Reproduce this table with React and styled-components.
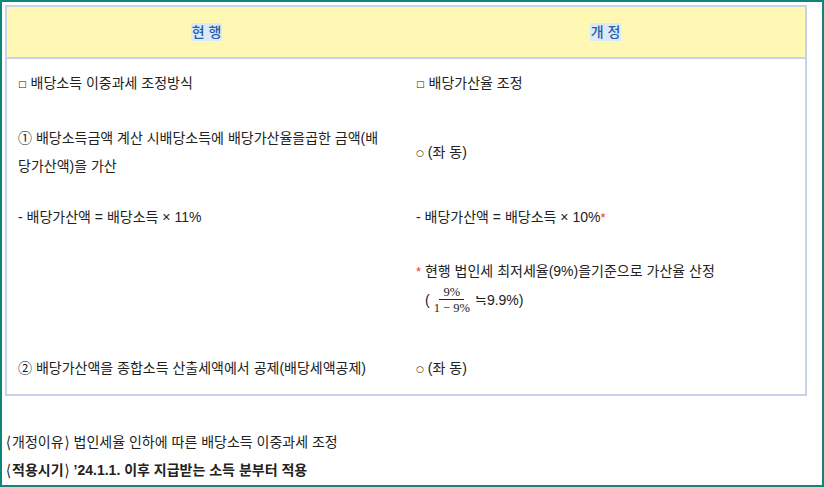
import React from 'react';
import styled, { createGlobalStyle } from 'styled-components';

const GlobalStyle = createGlobalStyle`
  html, body { margin: 0; padding: 0; background: #fff; }
  body {
    font-family: "Liberation Sans", "Noto Sans CJK KR", sans-serif;
    font-size: 14px;
    color: #222;
  }
`;

const Frame = styled.div`
  width: 824px;
  height: 487px;
  box-sizing: border-box;
  border: 2px solid #0f8579;
  padding: 3px;
  overflow: hidden;
`;

const Table = styled.div`
  width: 802px;
  box-sizing: border-box;
  border: 2px solid #c6d3e9;
`;

const HeadRow = styled.div`
  display: grid;
  grid-template-columns: 1fr 1fr;
  height: 50px;
  background: #fff8b5;
  border-bottom: 2px solid #c6d3e9;
`;

const HeadCell = styled.div`
  display: flex;
  align-items: center;
  justify-content: center;
`;

const HeadLabel = styled.span`
  background: #ddeaf6;
  color: #1f5fae;
  font-size: 14px;
  font-weight: 500;
  line-height: 18px;
  padding: 0 1px;
`;

const Body = styled.div`
  padding: 10px 0 12px;
`;

const Row = styled.div`
  display: grid;
  grid-template-columns: 1fr 1fr;
  margin-top: ${(p) => p.$top || 0}px;
`;

const Cell = styled.div`
  display: flex;
  flex-direction: column;
  justify-content: ${(p) => (p.$center ? 'center' : 'flex-start')};
  padding: 0 11px 0 ${(p) => (p.$right ? 10 : 11)}px;
  white-space: nowrap;
`;

const Line = styled.div`
  height: 28px;
  line-height: 28px;
`;

const Mark = styled.span`
  font-family: "DejaVu Sans", sans-serif;
  font-size: 9px;
  line-height: 1;
  margin-right: 4px;
  vertical-align: 1px;
`;

const Star = styled.span`
  color: #e33b2e;
  font-size: 13px;
  line-height: 1;
`;

const FormulaLine = styled.div`
  display: flex;
  align-items: center;
  height: 30px;
  padding-left: 9px;
  line-height: 1;
`;

const Fraction = styled.span`
  display: inline-flex;
  flex-direction: column;
  align-items: center;
  font-family: "Liberation Serif", "DejaVu Serif", serif;
  font-size: 12.5px;
  margin: 0 2px 0 1px;
`;

const Numer = styled.span`
  padding: 0 4px 1px;
  border-bottom: 1px solid #222;
`;

const Denom = styled.span`
  padding: 2px 3px 0;
`;

const Footer = styled.div`
  margin-top: 32px;
  padding-left: 1px;
`;

const FootLine = styled(Line)`
  font-weight: ${(p) => (p.$strong ? 600 : 400)};
`;

const Angle = styled.span`
  display: inline-block;
  font-family: "DejaVu Sans", sans-serif;
  font-weight: 400;
  font-size: 13px;
  transform: scaleY(1.25);
  margin: ${(p) => (p.$close ? '0 0 0 1px' : '0 1px 0 0')};
`;

export default function App() {
  return (
    <>
      <GlobalStyle />
      <Frame>
        <Table>
          <HeadRow>
            <HeadCell><HeadLabel>현 행</HeadLabel></HeadCell>
            <HeadCell><HeadLabel>개 정</HeadLabel></HeadCell>
          </HeadRow>
          <Body>
            <Row>
              <Cell><Line><Mark>□</Mark>배당소득 이중과세 조정방식</Line></Cell>
              <Cell $right><Line><Mark>□</Mark>배당가산율 조정</Line></Cell>
            </Row>
            <Row $top={27}>
              <Cell>
                <Line>① 배당소득금액 계산 시배당소득에 배당가산율을곱한 금액(배</Line>
                <Line>당가산액)을 가산</Line>
              </Cell>
              <Cell $right $center><Line><Mark>○</Mark>(좌 동)</Line></Cell>
            </Row>
            <Row $top={23}>
              <Cell><Line>- 배당가산액 = 배당소득 × 11%</Line></Cell>
              <Cell $right>
                <Line>- 배당가산액 = 배당소득 × 10%<Star>*</Star></Line>
              </Cell>
            </Row>
            <Row $top={26}>
              <Cell />
              <Cell $right>
                <Line><Star>*</Star> 현행 법인세 최저세율(9%)을기준으로 가산율 산정</Line>
                <FormulaLine>
                  (
                  <Fraction>
                    <Numer>9%</Numer>
                    <Denom>1 − 9%</Denom>
                  </Fraction>
                  ≒9.9%)
                </FormulaLine>
              </Cell>
            </Row>
            <Row $top={39}>
              <Cell><Line>② 배당가산액을 종합소득 산출세액에서 공제(배당세액공제)</Line></Cell>
              <Cell $right><Line><Mark>○</Mark>(좌 동)</Line></Cell>
            </Row>
          </Body>
        </Table>
        <Footer>
          <FootLine><Angle>⟨</Angle>개정이유<Angle $close>⟩</Angle> 법인세율 인하에 따른 배당소득 이중과세 조정</FootLine>
          <FootLine $strong><Angle>⟨</Angle>적용시기<Angle $close>⟩</Angle> ’24.1.1. 이후 지급받는 소득 분부터 적용</FootLine>
        </Footer>
      </Frame>
    </>
  );
}
